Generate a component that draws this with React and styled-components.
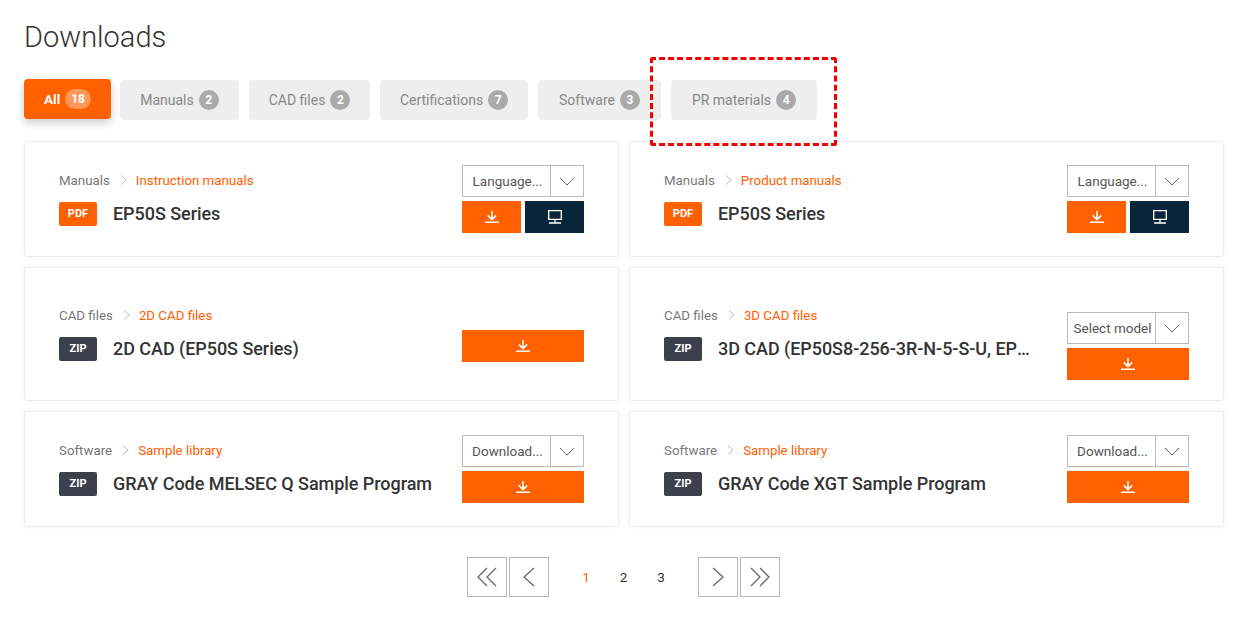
import styled, { createGlobalStyle } from "styled-components";

const orange = "#ff6000";

const GlobalStyle = createGlobalStyle`
  html, body {
    margin: 0;
    padding: 0;
    background: #fff;
    font-family: "Roboto", "Liberation Sans", sans-serif;
  }
`;

const Page = styled.div`
  position: relative;
  width: 1200px;
  height: 620px;
  padding: 0 27px 0 24px;
  overflow: hidden;
`;

const Title = styled.h1`
  margin: 0;
  padding-top: 19px;
  height: 61px;
  font-size: 29px;
  line-height: 37px;
  font-weight: 300;
  color: #333;
`;

const Tabs = styled.div`
  display: flex;
  gap: 10px;
  height: 40px;
  margin-bottom: 21px;
`;

const Tab = styled.div`
  display: flex;
  align-items: center;
  justify-content: center;
  width: ${(p) => p.$w}px;
  height: 40px;
  border-radius: 4px;
  font-size: ${(p) => (p.$active ? "13.5px" : "14px")};
  background: ${(p) => (p.$active ? orange : "#eeeeee")};
  color: ${(p) => (p.$active ? "#fff" : "#888")};
  font-weight: ${(p) => (p.$active ? 700 : 400)};
  box-shadow: ${(p) => (p.$active ? "0 4px 10px rgba(0,0,0,0.2)" : "none")};
  margin: ${(p) => (p.$active ? "-1px -1px 0 0" : "0")};
`;

const Count = styled.span`
  display: inline-flex;
  align-items: center;
  justify-content: center;
  min-width: 20px;
  height: 20px;
  padding: ${(p) => (p.$active ? "0 6px" : "0")};
  box-sizing: border-box;
  margin-left: 5px;
  border-radius: 10px;
  font-size: 12px;
  font-weight: 700;
  color: #fff;
  background: ${(p) => (p.$active ? "rgba(255,255,255,0.35)" : "#aaaaaa")};
`;

const Marker = styled.div`
  position: absolute;
  left: 650px;
  top: 57px;
  width: 181px;
  height: 83px;
  border: 3px dashed #f00000;
  border-radius: 3px;
`;

const Grid = styled.div`
  display: grid;
  grid-template-columns: 595px 595px;
  grid-template-rows: 116px 134px 116px;
  gap: 10px;
`;

const Card = styled.div`
  box-sizing: border-box;
  display: flex;
  align-items: center;
  justify-content: space-between;
  padding: 0 34px 2px;
  border: 1px solid #ededed;
  border-radius: 3px;
  box-shadow: 0 0 4px rgba(0, 0, 0, 0.05);
`;

const Info = styled.div`
  min-width: 0;
  flex: 1;
  padding-right: 28px;
`;

const Crumbs = styled.div`
  display: flex;
  align-items: center;
  height: 20px;
  font-size: 13.3px;
  color: #777;
  margin-bottom: 12px;
`;

const CrumbLink = styled.span`
  color: ${orange};
`;

const CrumbArrow = styled.svg`
  width: 7px;
  height: 10px;
  margin: 0 9px 0 10px;
  fill: none;
  stroke: #bbb;
  stroke-width: 1;
`;

const TitleRow = styled.div`
  display: flex;
  align-items: center;
`;

const Badge = styled.span`
  flex: none;
  width: 38px;
  height: 24px;
  line-height: 24px;
  margin-right: 16px;
  border-radius: 2px;
  text-align: center;
  font-size: 11px;
  font-weight: 700;
  color: #fff;
  background: ${(p) => (p.$zip ? "#3c404c" : orange)};
`;

const Name = styled.div`
  padding-bottom: 2px;
  font-size: 18px;
  font-weight: 500;
  letter-spacing: -0.05px;
  color: #333;
  white-space: nowrap;
  overflow: hidden;
  text-overflow: ellipsis;
`;

const Actions = styled.div`
  flex: none;
  width: 122px;
  display: flex;
  flex-direction: column;
  gap: 4px;
  margin-top: ${(p) => (p.$low ? "26px" : "2px")};
`;

const Select = styled.div`
  box-sizing: border-box;
  display: flex;
  height: 32px;
  border: 1px solid #b9b9b9;
  font-size: 13.5px;
  color: #555;
`;

const SelectText = styled.span`
  flex: 1;
  min-width: 0;
  padding-left: 2px;
  line-height: 30px;
  text-align: center;
  white-space: nowrap;
`;

const SelectArrow = styled.span`
  flex: none;
  box-sizing: border-box;
  width: 33px;
  display: flex;
  align-items: center;
  justify-content: center;
  border-left: 1px solid #b9b9b9;
`;

const ButtonRow = styled.div`
  display: flex;
  gap: 4px;
`;

const Button = styled.div`
  flex: 1;
  height: 32px;
  display: flex;
  align-items: center;
  justify-content: center;
  background: ${(p) => (p.$dark ? "#082539" : orange)};
`;

const Pager = styled.div`
  display: flex;
  justify-content: center;
  align-items: center;
  margin-top: 30px;
  gap: 2px;
  padding-right: 1px;
`;

const PageButton = styled.div`
  box-sizing: border-box;
  width: 40px;
  height: 40px;
  display: flex;
  align-items: center;
  justify-content: center;
  border: 1px solid #b5b5b5;
`;

const Numbers = styled.div`
  display: flex;
  width: 145px;
  justify-content: center;
  gap: 26.5px;
  font-size: 13.5px;
  color: #333;
`;

const Num = styled.span`
  width: 11px;
  text-align: center;
  color: ${(p) => (p.$active ? orange : "#333")};
`;

const Chevron = () => (
  <svg width="16" height="9" viewBox="0 0 16 9" fill="none" stroke="#666" strokeWidth="1">
    <path d="M1 1l7 7 7-7" />
  </svg>
);

const DownloadIcon = () => (
  <svg width="14" height="12" viewBox="0 0 14 12" fill="none" stroke="#fff" strokeWidth="1.6">
    <path d="M7 0v8M2.8 4.4L7 8.6l4.2-4.2M0 11.2h14" />
  </svg>
);

const MonitorIcon = () => (
  <svg width="14" height="14" viewBox="0 0 14 14" fill="none" stroke="#fff" strokeWidth="1.3">
    <path d="M0.7 0.7h12.6v8.6H0.7zM7 9.3v3M1 13h12" />
  </svg>
);

const PagerIcon = ({ d }) => (
  <svg width="20" height="20" viewBox="0 0 20 20" fill="none" stroke="#666" strokeWidth="1.3">
    <path d={d} />
  </svg>
);

const tabs = [
  { label: "All", count: 18, w: 87, active: true },
  { label: "Manuals", count: 2, w: 119 },
  { label: "CAD files", count: 2, w: 121 },
  { label: "Certifications", count: 7, w: 148 },
  { label: "Software", count: 3, w: 123 },
  { label: "PR materials", count: 4, w: 146 },
];

const cards = [
  { cat: "Manuals", sub: "Instruction manuals", type: "PDF", name: "EP50S Series", select: "Language...", viewer: true },
  { cat: "Manuals", sub: "Product manuals", type: "PDF", name: "EP50S Series", select: "Language...", viewer: true },
  { cat: "CAD files", sub: "2D CAD files", type: "ZIP", name: "2D CAD (EP50S Series)", low: true },
  { cat: "CAD files", sub: "3D CAD files", type: "ZIP", name: "3D CAD (EP50S8-256-3R-N-5-S-U, EP50S8-1024)", select: "Select model", low: true },
  { cat: "Software", sub: "Sample library", type: "ZIP", name: "GRAY Code MELSEC Q Sample Program", select: "Download..." },
  { cat: "Software", sub: "Sample library", type: "ZIP", name: "GRAY Code XGT Sample Program", select: "Download..." },
];

export default function App() {
  return (
    <Page>
      <GlobalStyle />
      <Title>Downloads</Title>
      <Tabs>
        {tabs.map((t) => (
          <Tab key={t.label} $w={t.w} $active={t.active}>
            {t.label}
            <Count $active={t.active}>{t.count}</Count>
          </Tab>
        ))}
      </Tabs>
      <Marker />
      <Grid>
        {cards.map((c, i) => (
          <Card key={i}>
            <Info>
              <Crumbs>
                {c.cat}
                <CrumbArrow viewBox="0 0 7 10">
                  <path d="M1 0.5l5 4.5-5 4.5" />
                </CrumbArrow>
                <CrumbLink>{c.sub}</CrumbLink>
              </Crumbs>
              <TitleRow>
                <Badge $zip={c.type === "ZIP"}>{c.type}</Badge>
                <Name>{c.name}</Name>
              </TitleRow>
            </Info>
            <Actions $low={c.low}>
              {c.select && (
                <Select>
                  <SelectText>{c.select}</SelectText>
                  <SelectArrow>
                    <Chevron />
                  </SelectArrow>
                </Select>
              )}
              <ButtonRow>
                <Button>
                  <DownloadIcon />
                </Button>
                {c.viewer && (
                  <Button $dark>
                    <MonitorIcon />
                  </Button>
                )}
              </ButtonRow>
            </Actions>
          </Card>
        ))}
      </Grid>
      <Pager>
        <PageButton>
          <PagerIcon d="M10 1L1 10l9 9M19 1L10 10l9 9" />
        </PageButton>
        <PageButton>
          <PagerIcon d="M15 1L5 10l10 9" />
        </PageButton>
        <Numbers>
          <Num $active>1</Num>
          <Num>2</Num>
          <Num>3</Num>
        </Numbers>
        <PageButton>
          <PagerIcon d="M5 1l10 9-10 9" />
        </PageButton>
        <PageButton>
          <PagerIcon d="M1 1l9 9-9 9M10 1l9 9-9 9" />
        </PageButton>
      </Pager>
    </Page>
  );
}
